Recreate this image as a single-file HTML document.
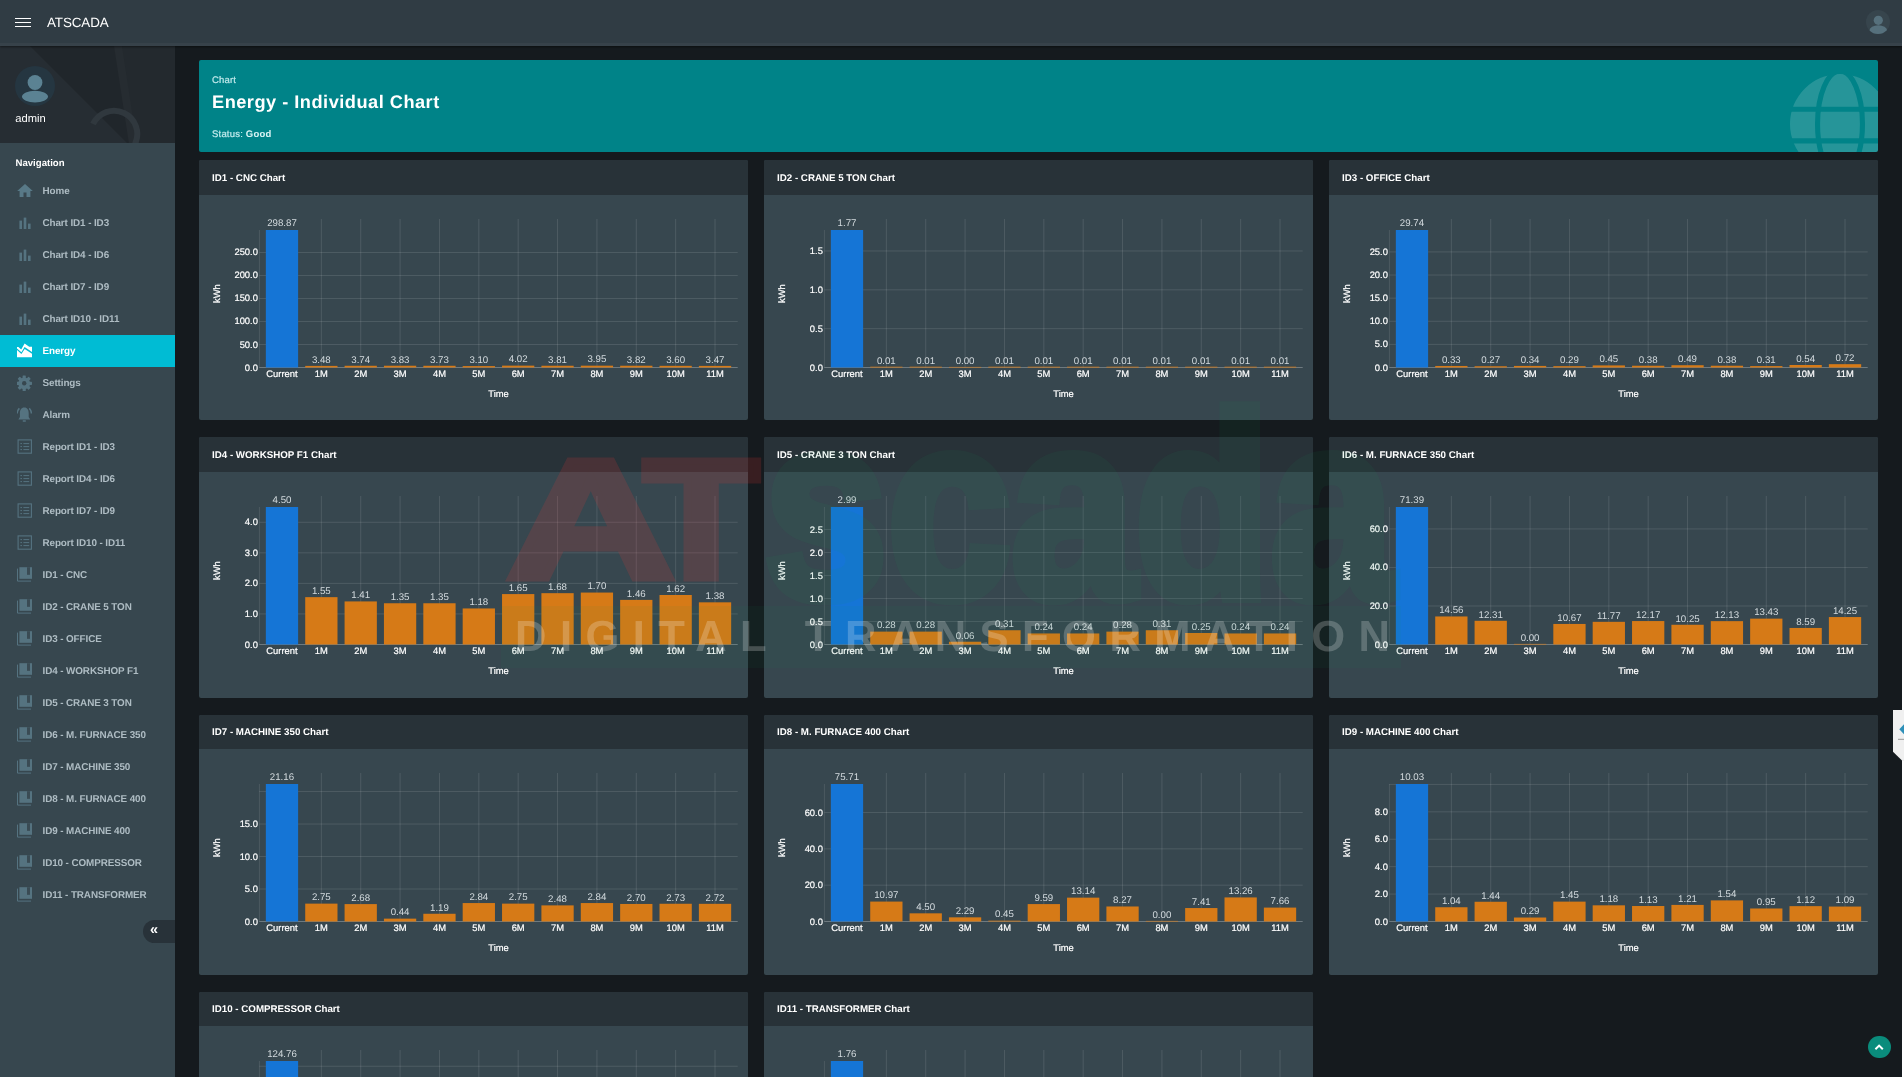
<!DOCTYPE html>
<html lang="en"><head><meta charset="utf-8"><title>ATSCADA - Energy</title>
<style>
html,body{margin:0;padding:0}
body{width:1904px;height:1077px;overflow:hidden;background:#151a1e;font-family:"Liberation Sans", sans-serif;position:relative;color:#fff;text-rendering:geometricPrecision}
svg text{text-rendering:geometricPrecision}
.edge{position:absolute;left:1902px;top:0;width:2px;height:1077px;background:#fff;z-index:50}
.top{position:absolute;left:0;top:0;width:1902px;height:46px;background:#303c44;box-shadow:0 1px 2px rgba(0,0,0,.45);z-index:20}
.burger{position:absolute;left:15px;top:18px;width:16px;height:9px}
.burger i{position:absolute;left:0;width:16px;height:1.2px;background:#fff}
.brand{position:absolute;left:47px;top:14.9px;font-size:13.4px;line-height:16px;color:#fff;letter-spacing:-0.1px}
.tav{position:absolute;left:1866px;top:10px;width:24px;height:24px;border-radius:50%;background:#37454d;overflow:hidden}
.side{position:absolute;left:0;top:46px;width:175px;height:1031px;background:#37474f;z-index:10}
.user{position:absolute;left:0;top:0;width:175px;height:97px;background:#20262b;overflow:hidden}
.uname{position:absolute;left:15.3px;top:66px;font-size:11.2px;line-height:14px;color:#fff;font-weight:normal}
.av{position:absolute;left:15px;top:19.5px;width:40px;height:40px;border-radius:50%;background:#253641;overflow:hidden}
.navt{position:absolute;left:15.5px;top:112px;font-size:9.6px;line-height:12px;font-weight:bold;color:#fff}
.ni{position:absolute;left:0;width:175px;height:32px;color:#557380}
.ni .ic{position:absolute;left:17px;top:8px;width:16px;height:16px;display:block}
.ni .ic svg{display:block}
.ni .lb{position:absolute;left:42.5px;top:11px;font-size:9.9px;line-height:12px;font-weight:bold;color:#aebcc3;white-space:nowrap;letter-spacing:-0.1px}
.ni.hm{color:#587987}
.ni.act{background:#00bcd4;color:#fff}
.ni.act .lb{color:#fff}
.colbtn{position:absolute;left:143px;top:873.7px;width:32px;height:23.5px;border-radius:12px 0 0 12px;background:#283239;color:#fff;font-size:14.5px;line-height:20px;text-indent:7px;font-weight:bold}
.hero{position:absolute;left:199px;top:60px;width:1679px;height:92px;background:#008388;border-radius:2px;overflow:hidden}
.hero .s1{position:absolute;left:13px;top:15px;font-size:9.5px;line-height:12px;color:#c2eaec;letter-spacing:.15px;-webkit-text-stroke:.2px #c2eaec}
.hero .s2{position:absolute;left:13px;top:31px;font-size:18.2px;line-height:22px;font-weight:bold;color:#fff;letter-spacing:0.5px;white-space:nowrap}
.hero .s3{position:absolute;left:13px;top:68.5px;font-size:9.5px;line-height:12px;color:#c4ecee;letter-spacing:.2px}
.hero .s3 span{-webkit-text-stroke:.2px #c4ecee}
.hero .s3 b{color:#d9f4f5}
.globe{position:absolute;left:1591px;top:13.5px;width:100px;height:100px;opacity:.15}
.card{position:absolute;width:549px;height:260px;background:#37474f;border-radius:2px;overflow:hidden}
.card .hd{height:35px;background:#283238;font-size:9.75px;line-height:37.2px;font-weight:bold;color:#fff;padding-left:13px;box-sizing:border-box;white-space:nowrap}
.card svg.ch{display:block}
.ax{stroke:#fff;stroke-width:.2px}
.wm{position:absolute;left:480px;top:400px;width:960px;height:290px;z-index:30;pointer-events:none}
.rt{position:absolute;left:1893px;top:710px;width:11px;height:51px;z-index:60}
.up{position:absolute;left:1868px;top:1035.5px;width:22.5px;height:22.5px;border-radius:50%;background:#0a8c7c;z-index:40}
.layer{position:absolute;left:0;top:0;width:1904px;height:1077px;will-change:transform}
</style></head><body>
<div class="layer">
<div class="top">
  <div class="burger"><i style="top:0"></i><i style="top:4px"></i><i style="top:8px"></i></div>
  <div class="brand">ATSCADA</div>
  <div style="position:absolute;left:0;top:43px;width:1902px;height:3px;background:rgba(255,255,255,.035)"></div>
  <div class="tav"><svg viewBox="0 0 24 24" width="24" height="24"><circle cx="12.3" cy="10.3" r="4.6" fill="#56707c"/><ellipse cx="12.3" cy="20.4" rx="8.8" ry="5.2" fill="#56707c"/></svg></div>
</div>
<div class="side">
  <div class="user">
    <svg width="175" height="98" viewBox="0 0 175 98" style="position:absolute;left:0;top:0"><path d="M0 0 L30 0 L128 98 L0 98 Z" fill="#262d33"/><path d="M118 0 L133 98 L175 98 L175 0 Z" fill="#23292e"/><path d="M114 0 L122 0 L137 98 L129 98 Z" fill="#262c31"/><path d="M93 78 A22 22 0 1 1 135 98" fill="none" stroke="#30383e" stroke-width="6"/></svg>
    <div class="av"><svg viewBox="0 0 40 40" width="40" height="40"><circle cx="20" cy="16.5" r="7.4" fill="#5b8293"/><ellipse cx="20" cy="30.6" rx="13" ry="5.9" fill="#5b8293"/></svg></div>
    <div class="uname">admin</div>
  </div>
  <div class="navt">Navigation</div>
  <div style="position:absolute;left:0;top:-46px">
  <div class="ni hm" style="top:175px"><span class="ic"><svg viewBox="0 0 16 16" width="16" height="16"><path d="M8 1 L0.2 8 H2.6 V14 H6.5 V9.6 H9.5 V14 H13.4 V8 H15.8 Z" fill="currentColor"/></svg></span><span class="lb">Home</span></div><div class="ni" style="top:207px"><span class="ic"><svg viewBox="0 0 16 16" width="16" height="16"><rect x="2.4" y="5.6" width="2.6" height="8.4" fill="currentColor"/><rect x="6.7" y="2.6" width="2.6" height="11.4" fill="currentColor"/><rect x="11" y="8.6" width="2.6" height="5.4" fill="currentColor"/></svg></span><span class="lb">Chart ID1 - ID3</span></div><div class="ni" style="top:239px"><span class="ic"><svg viewBox="0 0 16 16" width="16" height="16"><rect x="2.4" y="5.6" width="2.6" height="8.4" fill="currentColor"/><rect x="6.7" y="2.6" width="2.6" height="11.4" fill="currentColor"/><rect x="11" y="8.6" width="2.6" height="5.4" fill="currentColor"/></svg></span><span class="lb">Chart ID4 - ID6</span></div><div class="ni" style="top:271px"><span class="ic"><svg viewBox="0 0 16 16" width="16" height="16"><rect x="2.4" y="5.6" width="2.6" height="8.4" fill="currentColor"/><rect x="6.7" y="2.6" width="2.6" height="11.4" fill="currentColor"/><rect x="11" y="8.6" width="2.6" height="5.4" fill="currentColor"/></svg></span><span class="lb">Chart ID7 - ID9</span></div><div class="ni" style="top:303px"><span class="ic"><svg viewBox="0 0 16 16" width="16" height="16"><rect x="2.4" y="5.6" width="2.6" height="8.4" fill="currentColor"/><rect x="6.7" y="2.6" width="2.6" height="11.4" fill="currentColor"/><rect x="11" y="8.6" width="2.6" height="5.4" fill="currentColor"/></svg></span><span class="lb">Chart ID10 - ID11</span></div><div class="ni act" style="top:335px"><span class="ic"><svg viewBox="0 0 16 16" width="16" height="16"><path d="M-0.2 4.1 H1.4 L4.2 6.5 L7.6 0.5 L12.2 3.7 H15 V8.9 L7.6 4.1 L4.4 9.3 L-0.2 5.3 Z M-0.2 6.9 L4.4 11.1 L7.7 5.9 L15 10.7 V14.2 H-0.2 Z" fill="currentColor"/></svg></span><span class="lb">Energy</span></div><div class="ni" style="top:367px"><span class="ic"><svg viewBox="0 0 16 16" width="16" height="16"><g fill="currentColor"><circle cx="7.2" cy="8.3" r="5.9"/><rect x="5.6" y="0.5" width="3.2" height="15.6" rx="0.6"/><rect x="5.6" y="0.5" width="3.2" height="15.6" rx="0.6" transform="rotate(45 7.2 8.3)"/><rect x="5.6" y="0.5" width="3.2" height="15.6" rx="0.6" transform="rotate(90 7.2 8.3)"/><rect x="5.6" y="0.5" width="3.2" height="15.6" rx="0.6" transform="rotate(135 7.2 8.3)"/></g><circle cx="7.2" cy="8.3" r="2.2" fill="#37474f"/></svg></span><span class="lb">Settings</span></div><div class="ni" style="top:399px"><span class="ic"><svg viewBox="0 0 16 16" width="16" height="16"><g fill="currentColor"><path d="M7.3 0.6 C4.2 0.6 2.9 3.2 2.9 6.2 V10 L1.4 12.4 H13.2 L11.7 10 V6.2 C11.7 3.2 10.4 0.6 7.3 0.6 Z"/><rect x="5.6" y="13.2" width="3.4" height="1.5" rx="0.7"/><path d="M1.9 0.8 C0.4 2.3 -0.5 4.2 -0.5 6.4 H1 C1 4.6 1.7 3.1 2.9 1.9 Z"/><path d="M12.7 0.8 C14.2 2.3 15.1 4.2 15.1 6.4 H13.6 C13.6 4.6 12.9 3.1 11.7 1.9 Z"/></g></svg></span><span class="lb">Alarm</span></div><div class="ni" style="top:431px"><span class="ic"><svg viewBox="0 0 16 16" width="16" height="16"><g fill="none" stroke="currentColor" stroke-width="1.1"><rect x="1.1" y="0.9" width="13.3" height="13.3"/><path d="M3.4 4.6 H5 M6.4 4.6 H12.2 M3.4 7.6 H5 M6.4 7.6 H12.2 M3.4 10.6 H5 M6.4 10.6 H12.2" stroke-width="1"/></g></svg></span><span class="lb">Report ID1 - ID3</span></div><div class="ni" style="top:463px"><span class="ic"><svg viewBox="0 0 16 16" width="16" height="16"><g fill="none" stroke="currentColor" stroke-width="1.1"><rect x="1.1" y="0.9" width="13.3" height="13.3"/><path d="M3.4 4.6 H5 M6.4 4.6 H12.2 M3.4 7.6 H5 M6.4 7.6 H12.2 M3.4 10.6 H5 M6.4 10.6 H12.2" stroke-width="1"/></g></svg></span><span class="lb">Report ID4 - ID6</span></div><div class="ni" style="top:495px"><span class="ic"><svg viewBox="0 0 16 16" width="16" height="16"><g fill="none" stroke="currentColor" stroke-width="1.1"><rect x="1.1" y="0.9" width="13.3" height="13.3"/><path d="M3.4 4.6 H5 M6.4 4.6 H12.2 M3.4 7.6 H5 M6.4 7.6 H12.2 M3.4 10.6 H5 M6.4 10.6 H12.2" stroke-width="1"/></g></svg></span><span class="lb">Report ID7 - ID9</span></div><div class="ni" style="top:527px"><span class="ic"><svg viewBox="0 0 16 16" width="16" height="16"><g fill="none" stroke="currentColor" stroke-width="1.1"><rect x="1.1" y="0.9" width="13.3" height="13.3"/><path d="M3.4 4.6 H5 M6.4 4.6 H12.2 M3.4 7.6 H5 M6.4 7.6 H12.2 M3.4 10.6 H5 M6.4 10.6 H12.2" stroke-width="1"/></g></svg></span><span class="lb">Report ID10 - ID11</span></div><div class="ni" style="top:559px"><span class="ic"><svg viewBox="0 0 16 16" width="16" height="16"><path d="M2.4 0.2 H15 V11.8 H2.4 Z" fill="currentColor"/><rect x="10" y="0.2" width="3" height="7.6" fill="#3a4b54"/><path d="M0.5 1.6 V14.1 H14" fill="none" stroke="currentColor" stroke-width="1"/></svg></span><span class="lb">ID1 - CNC</span></div><div class="ni" style="top:591px"><span class="ic"><svg viewBox="0 0 16 16" width="16" height="16"><path d="M2.4 0.2 H15 V11.8 H2.4 Z" fill="currentColor"/><rect x="10" y="0.2" width="3" height="7.6" fill="#3a4b54"/><path d="M0.5 1.6 V14.1 H14" fill="none" stroke="currentColor" stroke-width="1"/></svg></span><span class="lb">ID2 - CRANE 5 TON</span></div><div class="ni" style="top:623px"><span class="ic"><svg viewBox="0 0 16 16" width="16" height="16"><path d="M2.4 0.2 H15 V11.8 H2.4 Z" fill="currentColor"/><rect x="10" y="0.2" width="3" height="7.6" fill="#3a4b54"/><path d="M0.5 1.6 V14.1 H14" fill="none" stroke="currentColor" stroke-width="1"/></svg></span><span class="lb">ID3 - OFFICE</span></div><div class="ni" style="top:655px"><span class="ic"><svg viewBox="0 0 16 16" width="16" height="16"><path d="M2.4 0.2 H15 V11.8 H2.4 Z" fill="currentColor"/><rect x="10" y="0.2" width="3" height="7.6" fill="#3a4b54"/><path d="M0.5 1.6 V14.1 H14" fill="none" stroke="currentColor" stroke-width="1"/></svg></span><span class="lb">ID4 - WORKSHOP F1</span></div><div class="ni" style="top:687px"><span class="ic"><svg viewBox="0 0 16 16" width="16" height="16"><path d="M2.4 0.2 H15 V11.8 H2.4 Z" fill="currentColor"/><rect x="10" y="0.2" width="3" height="7.6" fill="#3a4b54"/><path d="M0.5 1.6 V14.1 H14" fill="none" stroke="currentColor" stroke-width="1"/></svg></span><span class="lb">ID5 - CRANE 3 TON</span></div><div class="ni" style="top:719px"><span class="ic"><svg viewBox="0 0 16 16" width="16" height="16"><path d="M2.4 0.2 H15 V11.8 H2.4 Z" fill="currentColor"/><rect x="10" y="0.2" width="3" height="7.6" fill="#3a4b54"/><path d="M0.5 1.6 V14.1 H14" fill="none" stroke="currentColor" stroke-width="1"/></svg></span><span class="lb">ID6 - M. FURNACE 350</span></div><div class="ni" style="top:751px"><span class="ic"><svg viewBox="0 0 16 16" width="16" height="16"><path d="M2.4 0.2 H15 V11.8 H2.4 Z" fill="currentColor"/><rect x="10" y="0.2" width="3" height="7.6" fill="#3a4b54"/><path d="M0.5 1.6 V14.1 H14" fill="none" stroke="currentColor" stroke-width="1"/></svg></span><span class="lb">ID7 - MACHINE 350</span></div><div class="ni" style="top:783px"><span class="ic"><svg viewBox="0 0 16 16" width="16" height="16"><path d="M2.4 0.2 H15 V11.8 H2.4 Z" fill="currentColor"/><rect x="10" y="0.2" width="3" height="7.6" fill="#3a4b54"/><path d="M0.5 1.6 V14.1 H14" fill="none" stroke="currentColor" stroke-width="1"/></svg></span><span class="lb">ID8 - M. FURNACE 400</span></div><div class="ni" style="top:815px"><span class="ic"><svg viewBox="0 0 16 16" width="16" height="16"><path d="M2.4 0.2 H15 V11.8 H2.4 Z" fill="currentColor"/><rect x="10" y="0.2" width="3" height="7.6" fill="#3a4b54"/><path d="M0.5 1.6 V14.1 H14" fill="none" stroke="currentColor" stroke-width="1"/></svg></span><span class="lb">ID9 - MACHINE 400</span></div><div class="ni" style="top:847px"><span class="ic"><svg viewBox="0 0 16 16" width="16" height="16"><path d="M2.4 0.2 H15 V11.8 H2.4 Z" fill="currentColor"/><rect x="10" y="0.2" width="3" height="7.6" fill="#3a4b54"/><path d="M0.5 1.6 V14.1 H14" fill="none" stroke="currentColor" stroke-width="1"/></svg></span><span class="lb">ID10 - COMPRESSOR</span></div><div class="ni" style="top:879px"><span class="ic"><svg viewBox="0 0 16 16" width="16" height="16"><path d="M2.4 0.2 H15 V11.8 H2.4 Z" fill="currentColor"/><rect x="10" y="0.2" width="3" height="7.6" fill="#3a4b54"/><path d="M0.5 1.6 V14.1 H14" fill="none" stroke="currentColor" stroke-width="1"/></svg></span><span class="lb">ID11 - TRANSFORMER</span></div>
  </div>
  <div class="colbtn">«</div>
</div>
<div class="hero">
  <div class="s1">Chart</div>
  <div class="s2">Energy - Individual Chart</div>
  <div class="s3"><span>Status:</span> <b>Good</b></div>
  <svg class="globe" viewBox="0 0 98 98"><defs><mask id="gm"><rect width="98" height="98" fill="#000"/><circle cx="49" cy="49" r="49" fill="#fff"/><g fill="none" stroke="#000" stroke-width="5"><ellipse cx="49" cy="49" rx="22" ry="52"/><path d="M0 34.5 H98 M0 65.5 H98"/></g></mask></defs><rect width="98" height="98" fill="#fff" mask="url(#gm)"/></svg>
</div>
<div class="card" style="left:199px;top:160px;height:260px"><div class="hd" style="height:35px;line-height:37.2px">ID1 - CNC Chart</div><svg class="ch" width="549" height="225" viewBox="0 35 549 225" font-family='"Liberation Sans", sans-serif' font-size="9.4">
<rect x="121.85" y="59.0" width="1" height="148.5" fill="rgba(255,255,255,0.115)"/>
<rect x="161.22" y="59.0" width="1" height="148.5" fill="rgba(255,255,255,0.115)"/>
<rect x="200.58" y="59.0" width="1" height="148.5" fill="rgba(255,255,255,0.115)"/>
<rect x="239.95" y="59.0" width="1" height="148.5" fill="rgba(255,255,255,0.115)"/>
<rect x="279.32" y="59.0" width="1" height="148.5" fill="rgba(255,255,255,0.115)"/>
<rect x="318.68" y="59.0" width="1" height="148.5" fill="rgba(255,255,255,0.115)"/>
<rect x="358.05" y="59.0" width="1" height="148.5" fill="rgba(255,255,255,0.115)"/>
<rect x="397.42" y="59.0" width="1" height="148.5" fill="rgba(255,255,255,0.115)"/>
<rect x="436.78" y="59.0" width="1" height="148.5" fill="rgba(255,255,255,0.115)"/>
<rect x="476.15" y="59.0" width="1" height="148.5" fill="rgba(255,255,255,0.115)"/>
<rect x="515.52" y="59.0" width="1" height="148.5" fill="rgba(255,255,255,0.115)"/>
<rect x="60.3" y="207.00" width="478.4" height="1" fill="rgba(255,255,255,0.28)"/>
<rect x="60.3" y="184.00" width="478.4" height="1" fill="rgba(255,255,255,0.115)"/>
<rect x="60.3" y="160.99" width="478.4" height="1" fill="rgba(255,255,255,0.115)"/>
<rect x="60.3" y="137.99" width="478.4" height="1" fill="rgba(255,255,255,0.115)"/>
<rect x="60.3" y="114.99" width="478.4" height="1" fill="rgba(255,255,255,0.115)"/>
<rect x="60.3" y="91.98" width="478.4" height="1" fill="rgba(255,255,255,0.115)"/>
<rect x="59.9" y="70.0" width="1" height="137.5" fill="rgba(255,255,255,0.10)"/>
<rect x="66.84" y="70.00" width="32.28" height="137.50" fill="#1575d6"/>
<rect x="106.21" y="205.90" width="32.28" height="1.60" fill="#d67a17"/>
<rect x="145.58" y="205.78" width="32.28" height="1.72" fill="#d67a17"/>
<rect x="184.94" y="205.74" width="32.28" height="1.76" fill="#d67a17"/>
<rect x="224.31" y="205.78" width="32.28" height="1.72" fill="#d67a17"/>
<rect x="263.68" y="206.07" width="32.28" height="1.43" fill="#d67a17"/>
<rect x="303.04" y="205.65" width="32.28" height="1.85" fill="#d67a17"/>
<rect x="342.41" y="205.75" width="32.28" height="1.75" fill="#d67a17"/>
<rect x="381.78" y="205.68" width="32.28" height="1.82" fill="#d67a17"/>
<rect x="421.14" y="205.74" width="32.28" height="1.76" fill="#d67a17"/>
<rect x="460.51" y="205.84" width="32.28" height="1.66" fill="#d67a17"/>
<rect x="499.88" y="205.90" width="32.28" height="1.60" fill="#d67a17"/>
<text x="82.98" y="65.80" text-anchor="middle" fill="#d3dade" font-size="9.7">298.87</text>
<text x="122.35" y="202.70" text-anchor="middle" fill="#d3dade" font-size="9.7">3.48</text>
<text x="161.72" y="202.58" text-anchor="middle" fill="#d3dade" font-size="9.7">3.74</text>
<text x="201.08" y="202.54" text-anchor="middle" fill="#d3dade" font-size="9.7">3.83</text>
<text x="240.45" y="202.58" text-anchor="middle" fill="#d3dade" font-size="9.7">3.73</text>
<text x="279.82" y="202.87" text-anchor="middle" fill="#d3dade" font-size="9.7">3.10</text>
<text x="319.18" y="202.45" text-anchor="middle" fill="#d3dade" font-size="9.7">4.02</text>
<text x="358.55" y="202.55" text-anchor="middle" fill="#d3dade" font-size="9.7">3.81</text>
<text x="397.92" y="202.48" text-anchor="middle" fill="#d3dade" font-size="9.7">3.95</text>
<text x="437.28" y="202.54" text-anchor="middle" fill="#d3dade" font-size="9.7">3.82</text>
<text x="476.65" y="202.64" text-anchor="middle" fill="#d3dade" font-size="9.7">3.60</text>
<text x="516.02" y="202.70" text-anchor="middle" fill="#d3dade" font-size="9.7">3.47</text>
<text class="ax" x="82.98" y="216.70" text-anchor="middle" fill="#fff">Current</text>
<text class="ax" x="122.35" y="216.70" text-anchor="middle" fill="#fff">1M</text>
<text class="ax" x="161.72" y="216.70" text-anchor="middle" fill="#fff">2M</text>
<text class="ax" x="201.08" y="216.70" text-anchor="middle" fill="#fff">3M</text>
<text class="ax" x="240.45" y="216.70" text-anchor="middle" fill="#fff">4M</text>
<text class="ax" x="279.82" y="216.70" text-anchor="middle" fill="#fff">5M</text>
<text class="ax" x="319.18" y="216.70" text-anchor="middle" fill="#fff">6M</text>
<text class="ax" x="358.55" y="216.70" text-anchor="middle" fill="#fff">7M</text>
<text class="ax" x="397.92" y="216.70" text-anchor="middle" fill="#fff">8M</text>
<text class="ax" x="437.28" y="216.70" text-anchor="middle" fill="#fff">9M</text>
<text class="ax" x="476.65" y="216.70" text-anchor="middle" fill="#fff">10M</text>
<text class="ax" x="516.02" y="216.70" text-anchor="middle" fill="#fff">11M</text>
<text class="ax" x="58.9" y="210.50" text-anchor="end" fill="#fff">0.0</text>
<text class="ax" x="58.9" y="187.50" text-anchor="end" fill="#fff">50.0</text>
<text class="ax" x="58.9" y="164.49" text-anchor="end" fill="#fff">100.0</text>
<text class="ax" x="58.9" y="141.49" text-anchor="end" fill="#fff">150.0</text>
<text class="ax" x="58.9" y="118.49" text-anchor="end" fill="#fff">200.0</text>
<text class="ax" x="58.9" y="95.48" text-anchor="end" fill="#fff">250.0</text>
<text class="ax" x="299.5" y="237.3" text-anchor="middle" fill="#fff">Time</text>
<text class="ax" transform="translate(21.3,133.6) rotate(-90)" text-anchor="middle" fill="#fff">kWh</text>
</svg></div><div class="card" style="left:764px;top:160px;height:260px"><div class="hd" style="height:35px;line-height:37.2px">ID2 - CRANE 5 TON Chart</div><svg class="ch" width="549" height="225" viewBox="0 35 549 225" font-family='"Liberation Sans", sans-serif' font-size="9.4">
<rect x="121.85" y="59.0" width="1" height="148.5" fill="rgba(255,255,255,0.115)"/>
<rect x="161.22" y="59.0" width="1" height="148.5" fill="rgba(255,255,255,0.115)"/>
<rect x="200.58" y="59.0" width="1" height="148.5" fill="rgba(255,255,255,0.115)"/>
<rect x="239.95" y="59.0" width="1" height="148.5" fill="rgba(255,255,255,0.115)"/>
<rect x="279.32" y="59.0" width="1" height="148.5" fill="rgba(255,255,255,0.115)"/>
<rect x="318.68" y="59.0" width="1" height="148.5" fill="rgba(255,255,255,0.115)"/>
<rect x="358.05" y="59.0" width="1" height="148.5" fill="rgba(255,255,255,0.115)"/>
<rect x="397.42" y="59.0" width="1" height="148.5" fill="rgba(255,255,255,0.115)"/>
<rect x="436.78" y="59.0" width="1" height="148.5" fill="rgba(255,255,255,0.115)"/>
<rect x="476.15" y="59.0" width="1" height="148.5" fill="rgba(255,255,255,0.115)"/>
<rect x="515.52" y="59.0" width="1" height="148.5" fill="rgba(255,255,255,0.115)"/>
<rect x="60.3" y="207.00" width="478.4" height="1" fill="rgba(255,255,255,0.28)"/>
<rect x="60.3" y="168.16" width="478.4" height="1" fill="rgba(255,255,255,0.115)"/>
<rect x="60.3" y="129.32" width="478.4" height="1" fill="rgba(255,255,255,0.115)"/>
<rect x="60.3" y="90.47" width="478.4" height="1" fill="rgba(255,255,255,0.115)"/>
<rect x="59.9" y="70.0" width="1" height="137.5" fill="rgba(255,255,255,0.10)"/>
<rect x="66.84" y="70.00" width="32.28" height="137.50" fill="#1575d6"/>
<rect x="106.21" y="206.72" width="32.28" height="0.78" fill="#d67a17"/>
<rect x="145.58" y="206.72" width="32.28" height="0.78" fill="#d67a17"/>
<rect x="184.94" y="206.90" width="32.28" height="0.60" fill="#d67a17"/>
<rect x="224.31" y="206.72" width="32.28" height="0.78" fill="#d67a17"/>
<rect x="263.68" y="206.72" width="32.28" height="0.78" fill="#d67a17"/>
<rect x="303.04" y="206.72" width="32.28" height="0.78" fill="#d67a17"/>
<rect x="342.41" y="206.72" width="32.28" height="0.78" fill="#d67a17"/>
<rect x="381.78" y="206.72" width="32.28" height="0.78" fill="#d67a17"/>
<rect x="421.14" y="206.72" width="32.28" height="0.78" fill="#d67a17"/>
<rect x="460.51" y="206.72" width="32.28" height="0.78" fill="#d67a17"/>
<rect x="499.88" y="206.72" width="32.28" height="0.78" fill="#d67a17"/>
<text x="82.98" y="65.80" text-anchor="middle" fill="#d3dade" font-size="9.7">1.77</text>
<text x="122.35" y="203.52" text-anchor="middle" fill="#d3dade" font-size="9.7">0.01</text>
<text x="161.72" y="203.52" text-anchor="middle" fill="#d3dade" font-size="9.7">0.01</text>
<text x="201.08" y="204.30" text-anchor="middle" fill="#d3dade" font-size="9.7">0.00</text>
<text x="240.45" y="203.52" text-anchor="middle" fill="#d3dade" font-size="9.7">0.01</text>
<text x="279.82" y="203.52" text-anchor="middle" fill="#d3dade" font-size="9.7">0.01</text>
<text x="319.18" y="203.52" text-anchor="middle" fill="#d3dade" font-size="9.7">0.01</text>
<text x="358.55" y="203.52" text-anchor="middle" fill="#d3dade" font-size="9.7">0.01</text>
<text x="397.92" y="203.52" text-anchor="middle" fill="#d3dade" font-size="9.7">0.01</text>
<text x="437.28" y="203.52" text-anchor="middle" fill="#d3dade" font-size="9.7">0.01</text>
<text x="476.65" y="203.52" text-anchor="middle" fill="#d3dade" font-size="9.7">0.01</text>
<text x="516.02" y="203.52" text-anchor="middle" fill="#d3dade" font-size="9.7">0.01</text>
<text class="ax" x="82.98" y="216.70" text-anchor="middle" fill="#fff">Current</text>
<text class="ax" x="122.35" y="216.70" text-anchor="middle" fill="#fff">1M</text>
<text class="ax" x="161.72" y="216.70" text-anchor="middle" fill="#fff">2M</text>
<text class="ax" x="201.08" y="216.70" text-anchor="middle" fill="#fff">3M</text>
<text class="ax" x="240.45" y="216.70" text-anchor="middle" fill="#fff">4M</text>
<text class="ax" x="279.82" y="216.70" text-anchor="middle" fill="#fff">5M</text>
<text class="ax" x="319.18" y="216.70" text-anchor="middle" fill="#fff">6M</text>
<text class="ax" x="358.55" y="216.70" text-anchor="middle" fill="#fff">7M</text>
<text class="ax" x="397.92" y="216.70" text-anchor="middle" fill="#fff">8M</text>
<text class="ax" x="437.28" y="216.70" text-anchor="middle" fill="#fff">9M</text>
<text class="ax" x="476.65" y="216.70" text-anchor="middle" fill="#fff">10M</text>
<text class="ax" x="516.02" y="216.70" text-anchor="middle" fill="#fff">11M</text>
<text class="ax" x="58.9" y="210.50" text-anchor="end" fill="#fff">0.0</text>
<text class="ax" x="58.9" y="171.66" text-anchor="end" fill="#fff">0.5</text>
<text class="ax" x="58.9" y="132.82" text-anchor="end" fill="#fff">1.0</text>
<text class="ax" x="58.9" y="93.97" text-anchor="end" fill="#fff">1.5</text>
<text class="ax" x="299.5" y="237.3" text-anchor="middle" fill="#fff">Time</text>
<text class="ax" transform="translate(21.3,133.6) rotate(-90)" text-anchor="middle" fill="#fff">kWh</text>
</svg></div><div class="card" style="left:1329px;top:160px;height:260px"><div class="hd" style="height:35px;line-height:37.2px">ID3 - OFFICE Chart</div><svg class="ch" width="549" height="225" viewBox="0 35 549 225" font-family='"Liberation Sans", sans-serif' font-size="9.4">
<rect x="121.85" y="59.0" width="1" height="148.5" fill="rgba(255,255,255,0.115)"/>
<rect x="161.22" y="59.0" width="1" height="148.5" fill="rgba(255,255,255,0.115)"/>
<rect x="200.58" y="59.0" width="1" height="148.5" fill="rgba(255,255,255,0.115)"/>
<rect x="239.95" y="59.0" width="1" height="148.5" fill="rgba(255,255,255,0.115)"/>
<rect x="279.32" y="59.0" width="1" height="148.5" fill="rgba(255,255,255,0.115)"/>
<rect x="318.68" y="59.0" width="1" height="148.5" fill="rgba(255,255,255,0.115)"/>
<rect x="358.05" y="59.0" width="1" height="148.5" fill="rgba(255,255,255,0.115)"/>
<rect x="397.42" y="59.0" width="1" height="148.5" fill="rgba(255,255,255,0.115)"/>
<rect x="436.78" y="59.0" width="1" height="148.5" fill="rgba(255,255,255,0.115)"/>
<rect x="476.15" y="59.0" width="1" height="148.5" fill="rgba(255,255,255,0.115)"/>
<rect x="515.52" y="59.0" width="1" height="148.5" fill="rgba(255,255,255,0.115)"/>
<rect x="60.3" y="207.00" width="478.4" height="1" fill="rgba(255,255,255,0.28)"/>
<rect x="60.3" y="183.88" width="478.4" height="1" fill="rgba(255,255,255,0.115)"/>
<rect x="60.3" y="160.77" width="478.4" height="1" fill="rgba(255,255,255,0.115)"/>
<rect x="60.3" y="137.65" width="478.4" height="1" fill="rgba(255,255,255,0.115)"/>
<rect x="60.3" y="114.53" width="478.4" height="1" fill="rgba(255,255,255,0.115)"/>
<rect x="60.3" y="91.41" width="478.4" height="1" fill="rgba(255,255,255,0.115)"/>
<rect x="59.9" y="70.0" width="1" height="137.5" fill="rgba(255,255,255,0.10)"/>
<rect x="66.84" y="70.00" width="32.28" height="137.50" fill="#1575d6"/>
<rect x="106.21" y="205.97" width="32.28" height="1.53" fill="#d67a17"/>
<rect x="145.58" y="206.25" width="32.28" height="1.25" fill="#d67a17"/>
<rect x="184.94" y="205.93" width="32.28" height="1.57" fill="#d67a17"/>
<rect x="224.31" y="206.16" width="32.28" height="1.34" fill="#d67a17"/>
<rect x="263.68" y="205.42" width="32.28" height="2.08" fill="#d67a17"/>
<rect x="303.04" y="205.74" width="32.28" height="1.76" fill="#d67a17"/>
<rect x="342.41" y="205.23" width="32.28" height="2.27" fill="#d67a17"/>
<rect x="381.78" y="205.74" width="32.28" height="1.76" fill="#d67a17"/>
<rect x="421.14" y="206.07" width="32.28" height="1.43" fill="#d67a17"/>
<rect x="460.51" y="205.00" width="32.28" height="2.50" fill="#d67a17"/>
<rect x="499.88" y="204.17" width="32.28" height="3.33" fill="#d67a17"/>
<text x="82.98" y="65.80" text-anchor="middle" fill="#d3dade" font-size="9.7">29.74</text>
<text x="122.35" y="202.77" text-anchor="middle" fill="#d3dade" font-size="9.7">0.33</text>
<text x="161.72" y="203.05" text-anchor="middle" fill="#d3dade" font-size="9.7">0.27</text>
<text x="201.08" y="202.73" text-anchor="middle" fill="#d3dade" font-size="9.7">0.34</text>
<text x="240.45" y="202.96" text-anchor="middle" fill="#d3dade" font-size="9.7">0.29</text>
<text x="279.82" y="202.22" text-anchor="middle" fill="#d3dade" font-size="9.7">0.45</text>
<text x="319.18" y="202.54" text-anchor="middle" fill="#d3dade" font-size="9.7">0.38</text>
<text x="358.55" y="202.03" text-anchor="middle" fill="#d3dade" font-size="9.7">0.49</text>
<text x="397.92" y="202.54" text-anchor="middle" fill="#d3dade" font-size="9.7">0.38</text>
<text x="437.28" y="202.87" text-anchor="middle" fill="#d3dade" font-size="9.7">0.31</text>
<text x="476.65" y="201.80" text-anchor="middle" fill="#d3dade" font-size="9.7">0.54</text>
<text x="516.02" y="200.97" text-anchor="middle" fill="#d3dade" font-size="9.7">0.72</text>
<text class="ax" x="82.98" y="216.70" text-anchor="middle" fill="#fff">Current</text>
<text class="ax" x="122.35" y="216.70" text-anchor="middle" fill="#fff">1M</text>
<text class="ax" x="161.72" y="216.70" text-anchor="middle" fill="#fff">2M</text>
<text class="ax" x="201.08" y="216.70" text-anchor="middle" fill="#fff">3M</text>
<text class="ax" x="240.45" y="216.70" text-anchor="middle" fill="#fff">4M</text>
<text class="ax" x="279.82" y="216.70" text-anchor="middle" fill="#fff">5M</text>
<text class="ax" x="319.18" y="216.70" text-anchor="middle" fill="#fff">6M</text>
<text class="ax" x="358.55" y="216.70" text-anchor="middle" fill="#fff">7M</text>
<text class="ax" x="397.92" y="216.70" text-anchor="middle" fill="#fff">8M</text>
<text class="ax" x="437.28" y="216.70" text-anchor="middle" fill="#fff">9M</text>
<text class="ax" x="476.65" y="216.70" text-anchor="middle" fill="#fff">10M</text>
<text class="ax" x="516.02" y="216.70" text-anchor="middle" fill="#fff">11M</text>
<text class="ax" x="58.9" y="210.50" text-anchor="end" fill="#fff">0.0</text>
<text class="ax" x="58.9" y="187.38" text-anchor="end" fill="#fff">5.0</text>
<text class="ax" x="58.9" y="164.27" text-anchor="end" fill="#fff">10.0</text>
<text class="ax" x="58.9" y="141.15" text-anchor="end" fill="#fff">15.0</text>
<text class="ax" x="58.9" y="118.03" text-anchor="end" fill="#fff">20.0</text>
<text class="ax" x="58.9" y="94.91" text-anchor="end" fill="#fff">25.0</text>
<text class="ax" x="299.5" y="237.3" text-anchor="middle" fill="#fff">Time</text>
<text class="ax" transform="translate(21.3,133.6) rotate(-90)" text-anchor="middle" fill="#fff">kWh</text>
</svg></div><div class="card" style="left:199px;top:437px;height:261px"><div class="hd" style="height:35px;line-height:37.2px">ID4 - WORKSHOP F1 Chart</div><svg class="ch" width="549" height="225" viewBox="0 35 549 225" font-family='"Liberation Sans", sans-serif' font-size="9.4">
<rect x="121.85" y="59.0" width="1" height="148.5" fill="rgba(255,255,255,0.115)"/>
<rect x="161.22" y="59.0" width="1" height="148.5" fill="rgba(255,255,255,0.115)"/>
<rect x="200.58" y="59.0" width="1" height="148.5" fill="rgba(255,255,255,0.115)"/>
<rect x="239.95" y="59.0" width="1" height="148.5" fill="rgba(255,255,255,0.115)"/>
<rect x="279.32" y="59.0" width="1" height="148.5" fill="rgba(255,255,255,0.115)"/>
<rect x="318.68" y="59.0" width="1" height="148.5" fill="rgba(255,255,255,0.115)"/>
<rect x="358.05" y="59.0" width="1" height="148.5" fill="rgba(255,255,255,0.115)"/>
<rect x="397.42" y="59.0" width="1" height="148.5" fill="rgba(255,255,255,0.115)"/>
<rect x="436.78" y="59.0" width="1" height="148.5" fill="rgba(255,255,255,0.115)"/>
<rect x="476.15" y="59.0" width="1" height="148.5" fill="rgba(255,255,255,0.115)"/>
<rect x="515.52" y="59.0" width="1" height="148.5" fill="rgba(255,255,255,0.115)"/>
<rect x="60.3" y="207.00" width="478.4" height="1" fill="rgba(255,255,255,0.28)"/>
<rect x="60.3" y="176.44" width="478.4" height="1" fill="rgba(255,255,255,0.115)"/>
<rect x="60.3" y="145.89" width="478.4" height="1" fill="rgba(255,255,255,0.115)"/>
<rect x="60.3" y="115.33" width="478.4" height="1" fill="rgba(255,255,255,0.115)"/>
<rect x="60.3" y="84.78" width="478.4" height="1" fill="rgba(255,255,255,0.115)"/>
<rect x="59.9" y="70.0" width="1" height="137.5" fill="rgba(255,255,255,0.10)"/>
<rect x="66.84" y="70.00" width="32.28" height="137.50" fill="#1575d6"/>
<rect x="106.21" y="160.14" width="32.28" height="47.36" fill="#d67a17"/>
<rect x="145.58" y="164.42" width="32.28" height="43.08" fill="#d67a17"/>
<rect x="184.94" y="166.25" width="32.28" height="41.25" fill="#d67a17"/>
<rect x="224.31" y="166.25" width="32.28" height="41.25" fill="#d67a17"/>
<rect x="263.68" y="171.44" width="32.28" height="36.06" fill="#d67a17"/>
<rect x="303.04" y="157.08" width="32.28" height="50.42" fill="#d67a17"/>
<rect x="342.41" y="156.17" width="32.28" height="51.33" fill="#d67a17"/>
<rect x="381.78" y="155.56" width="32.28" height="51.94" fill="#d67a17"/>
<rect x="421.14" y="162.89" width="32.28" height="44.61" fill="#d67a17"/>
<rect x="460.51" y="158.00" width="32.28" height="49.50" fill="#d67a17"/>
<rect x="499.88" y="165.33" width="32.28" height="42.17" fill="#d67a17"/>
<text x="82.98" y="65.80" text-anchor="middle" fill="#d3dade" font-size="9.7">4.50</text>
<text x="122.35" y="156.94" text-anchor="middle" fill="#d3dade" font-size="9.7">1.55</text>
<text x="161.72" y="161.22" text-anchor="middle" fill="#d3dade" font-size="9.7">1.41</text>
<text x="201.08" y="163.05" text-anchor="middle" fill="#d3dade" font-size="9.7">1.35</text>
<text x="240.45" y="163.05" text-anchor="middle" fill="#d3dade" font-size="9.7">1.35</text>
<text x="279.82" y="168.24" text-anchor="middle" fill="#d3dade" font-size="9.7">1.18</text>
<text x="319.18" y="153.88" text-anchor="middle" fill="#d3dade" font-size="9.7">1.65</text>
<text x="358.55" y="152.97" text-anchor="middle" fill="#d3dade" font-size="9.7">1.68</text>
<text x="397.92" y="152.36" text-anchor="middle" fill="#d3dade" font-size="9.7">1.70</text>
<text x="437.28" y="159.69" text-anchor="middle" fill="#d3dade" font-size="9.7">1.46</text>
<text x="476.65" y="154.80" text-anchor="middle" fill="#d3dade" font-size="9.7">1.62</text>
<text x="516.02" y="162.13" text-anchor="middle" fill="#d3dade" font-size="9.7">1.38</text>
<text class="ax" x="82.98" y="216.70" text-anchor="middle" fill="#fff">Current</text>
<text class="ax" x="122.35" y="216.70" text-anchor="middle" fill="#fff">1M</text>
<text class="ax" x="161.72" y="216.70" text-anchor="middle" fill="#fff">2M</text>
<text class="ax" x="201.08" y="216.70" text-anchor="middle" fill="#fff">3M</text>
<text class="ax" x="240.45" y="216.70" text-anchor="middle" fill="#fff">4M</text>
<text class="ax" x="279.82" y="216.70" text-anchor="middle" fill="#fff">5M</text>
<text class="ax" x="319.18" y="216.70" text-anchor="middle" fill="#fff">6M</text>
<text class="ax" x="358.55" y="216.70" text-anchor="middle" fill="#fff">7M</text>
<text class="ax" x="397.92" y="216.70" text-anchor="middle" fill="#fff">8M</text>
<text class="ax" x="437.28" y="216.70" text-anchor="middle" fill="#fff">9M</text>
<text class="ax" x="476.65" y="216.70" text-anchor="middle" fill="#fff">10M</text>
<text class="ax" x="516.02" y="216.70" text-anchor="middle" fill="#fff">11M</text>
<text class="ax" x="58.9" y="210.50" text-anchor="end" fill="#fff">0.0</text>
<text class="ax" x="58.9" y="179.94" text-anchor="end" fill="#fff">1.0</text>
<text class="ax" x="58.9" y="149.39" text-anchor="end" fill="#fff">2.0</text>
<text class="ax" x="58.9" y="118.83" text-anchor="end" fill="#fff">3.0</text>
<text class="ax" x="58.9" y="88.28" text-anchor="end" fill="#fff">4.0</text>
<text class="ax" x="299.5" y="237.3" text-anchor="middle" fill="#fff">Time</text>
<text class="ax" transform="translate(21.3,133.6) rotate(-90)" text-anchor="middle" fill="#fff">kWh</text>
</svg></div><div class="card" style="left:764px;top:437px;height:261px"><div class="hd" style="height:35px;line-height:37.2px">ID5 - CRANE 3 TON Chart</div><svg class="ch" width="549" height="225" viewBox="0 35 549 225" font-family='"Liberation Sans", sans-serif' font-size="9.4">
<rect x="121.85" y="59.0" width="1" height="148.5" fill="rgba(255,255,255,0.115)"/>
<rect x="161.22" y="59.0" width="1" height="148.5" fill="rgba(255,255,255,0.115)"/>
<rect x="200.58" y="59.0" width="1" height="148.5" fill="rgba(255,255,255,0.115)"/>
<rect x="239.95" y="59.0" width="1" height="148.5" fill="rgba(255,255,255,0.115)"/>
<rect x="279.32" y="59.0" width="1" height="148.5" fill="rgba(255,255,255,0.115)"/>
<rect x="318.68" y="59.0" width="1" height="148.5" fill="rgba(255,255,255,0.115)"/>
<rect x="358.05" y="59.0" width="1" height="148.5" fill="rgba(255,255,255,0.115)"/>
<rect x="397.42" y="59.0" width="1" height="148.5" fill="rgba(255,255,255,0.115)"/>
<rect x="436.78" y="59.0" width="1" height="148.5" fill="rgba(255,255,255,0.115)"/>
<rect x="476.15" y="59.0" width="1" height="148.5" fill="rgba(255,255,255,0.115)"/>
<rect x="515.52" y="59.0" width="1" height="148.5" fill="rgba(255,255,255,0.115)"/>
<rect x="60.3" y="207.00" width="478.4" height="1" fill="rgba(255,255,255,0.28)"/>
<rect x="60.3" y="184.01" width="478.4" height="1" fill="rgba(255,255,255,0.115)"/>
<rect x="60.3" y="161.01" width="478.4" height="1" fill="rgba(255,255,255,0.115)"/>
<rect x="60.3" y="138.02" width="478.4" height="1" fill="rgba(255,255,255,0.115)"/>
<rect x="60.3" y="115.03" width="478.4" height="1" fill="rgba(255,255,255,0.115)"/>
<rect x="60.3" y="92.03" width="478.4" height="1" fill="rgba(255,255,255,0.115)"/>
<rect x="59.9" y="70.0" width="1" height="137.5" fill="rgba(255,255,255,0.10)"/>
<rect x="66.84" y="70.00" width="32.28" height="137.50" fill="#1575d6"/>
<rect x="106.21" y="194.62" width="32.28" height="12.88" fill="#d67a17"/>
<rect x="145.58" y="194.62" width="32.28" height="12.88" fill="#d67a17"/>
<rect x="184.94" y="204.74" width="32.28" height="2.76" fill="#d67a17"/>
<rect x="224.31" y="193.24" width="32.28" height="14.26" fill="#d67a17"/>
<rect x="263.68" y="196.46" width="32.28" height="11.04" fill="#d67a17"/>
<rect x="303.04" y="196.46" width="32.28" height="11.04" fill="#d67a17"/>
<rect x="342.41" y="194.62" width="32.28" height="12.88" fill="#d67a17"/>
<rect x="381.78" y="193.24" width="32.28" height="14.26" fill="#d67a17"/>
<rect x="421.14" y="196.00" width="32.28" height="11.50" fill="#d67a17"/>
<rect x="460.51" y="196.46" width="32.28" height="11.04" fill="#d67a17"/>
<rect x="499.88" y="196.46" width="32.28" height="11.04" fill="#d67a17"/>
<text x="82.98" y="65.80" text-anchor="middle" fill="#d3dade" font-size="9.7">2.99</text>
<text x="122.35" y="191.42" text-anchor="middle" fill="#d3dade" font-size="9.7">0.28</text>
<text x="161.72" y="191.42" text-anchor="middle" fill="#d3dade" font-size="9.7">0.28</text>
<text x="201.08" y="201.54" text-anchor="middle" fill="#d3dade" font-size="9.7">0.06</text>
<text x="240.45" y="190.04" text-anchor="middle" fill="#d3dade" font-size="9.7">0.31</text>
<text x="279.82" y="193.26" text-anchor="middle" fill="#d3dade" font-size="9.7">0.24</text>
<text x="319.18" y="193.26" text-anchor="middle" fill="#d3dade" font-size="9.7">0.24</text>
<text x="358.55" y="191.42" text-anchor="middle" fill="#d3dade" font-size="9.7">0.28</text>
<text x="397.92" y="190.04" text-anchor="middle" fill="#d3dade" font-size="9.7">0.31</text>
<text x="437.28" y="192.80" text-anchor="middle" fill="#d3dade" font-size="9.7">0.25</text>
<text x="476.65" y="193.26" text-anchor="middle" fill="#d3dade" font-size="9.7">0.24</text>
<text x="516.02" y="193.26" text-anchor="middle" fill="#d3dade" font-size="9.7">0.24</text>
<text class="ax" x="82.98" y="216.70" text-anchor="middle" fill="#fff">Current</text>
<text class="ax" x="122.35" y="216.70" text-anchor="middle" fill="#fff">1M</text>
<text class="ax" x="161.72" y="216.70" text-anchor="middle" fill="#fff">2M</text>
<text class="ax" x="201.08" y="216.70" text-anchor="middle" fill="#fff">3M</text>
<text class="ax" x="240.45" y="216.70" text-anchor="middle" fill="#fff">4M</text>
<text class="ax" x="279.82" y="216.70" text-anchor="middle" fill="#fff">5M</text>
<text class="ax" x="319.18" y="216.70" text-anchor="middle" fill="#fff">6M</text>
<text class="ax" x="358.55" y="216.70" text-anchor="middle" fill="#fff">7M</text>
<text class="ax" x="397.92" y="216.70" text-anchor="middle" fill="#fff">8M</text>
<text class="ax" x="437.28" y="216.70" text-anchor="middle" fill="#fff">9M</text>
<text class="ax" x="476.65" y="216.70" text-anchor="middle" fill="#fff">10M</text>
<text class="ax" x="516.02" y="216.70" text-anchor="middle" fill="#fff">11M</text>
<text class="ax" x="58.9" y="210.50" text-anchor="end" fill="#fff">0.0</text>
<text class="ax" x="58.9" y="187.51" text-anchor="end" fill="#fff">0.5</text>
<text class="ax" x="58.9" y="164.51" text-anchor="end" fill="#fff">1.0</text>
<text class="ax" x="58.9" y="141.52" text-anchor="end" fill="#fff">1.5</text>
<text class="ax" x="58.9" y="118.53" text-anchor="end" fill="#fff">2.0</text>
<text class="ax" x="58.9" y="95.53" text-anchor="end" fill="#fff">2.5</text>
<text class="ax" x="299.5" y="237.3" text-anchor="middle" fill="#fff">Time</text>
<text class="ax" transform="translate(21.3,133.6) rotate(-90)" text-anchor="middle" fill="#fff">kWh</text>
</svg></div><div class="card" style="left:1329px;top:437px;height:261px"><div class="hd" style="height:35px;line-height:37.2px">ID6 - M. FURNACE 350 Chart</div><svg class="ch" width="549" height="225" viewBox="0 35 549 225" font-family='"Liberation Sans", sans-serif' font-size="9.4">
<rect x="121.85" y="59.0" width="1" height="148.5" fill="rgba(255,255,255,0.115)"/>
<rect x="161.22" y="59.0" width="1" height="148.5" fill="rgba(255,255,255,0.115)"/>
<rect x="200.58" y="59.0" width="1" height="148.5" fill="rgba(255,255,255,0.115)"/>
<rect x="239.95" y="59.0" width="1" height="148.5" fill="rgba(255,255,255,0.115)"/>
<rect x="279.32" y="59.0" width="1" height="148.5" fill="rgba(255,255,255,0.115)"/>
<rect x="318.68" y="59.0" width="1" height="148.5" fill="rgba(255,255,255,0.115)"/>
<rect x="358.05" y="59.0" width="1" height="148.5" fill="rgba(255,255,255,0.115)"/>
<rect x="397.42" y="59.0" width="1" height="148.5" fill="rgba(255,255,255,0.115)"/>
<rect x="436.78" y="59.0" width="1" height="148.5" fill="rgba(255,255,255,0.115)"/>
<rect x="476.15" y="59.0" width="1" height="148.5" fill="rgba(255,255,255,0.115)"/>
<rect x="515.52" y="59.0" width="1" height="148.5" fill="rgba(255,255,255,0.115)"/>
<rect x="60.3" y="207.00" width="478.4" height="1" fill="rgba(255,255,255,0.28)"/>
<rect x="60.3" y="168.48" width="478.4" height="1" fill="rgba(255,255,255,0.115)"/>
<rect x="60.3" y="129.96" width="478.4" height="1" fill="rgba(255,255,255,0.115)"/>
<rect x="60.3" y="91.44" width="478.4" height="1" fill="rgba(255,255,255,0.115)"/>
<rect x="59.9" y="70.0" width="1" height="137.5" fill="rgba(255,255,255,0.10)"/>
<rect x="66.84" y="70.00" width="32.28" height="137.50" fill="#1575d6"/>
<rect x="106.21" y="179.46" width="32.28" height="28.04" fill="#d67a17"/>
<rect x="145.58" y="183.79" width="32.28" height="23.71" fill="#d67a17"/>
<rect x="184.94" y="206.90" width="32.28" height="0.60" fill="#d67a17"/>
<rect x="224.31" y="186.95" width="32.28" height="20.55" fill="#d67a17"/>
<rect x="263.68" y="184.83" width="32.28" height="22.67" fill="#d67a17"/>
<rect x="303.04" y="184.06" width="32.28" height="23.44" fill="#d67a17"/>
<rect x="342.41" y="187.76" width="32.28" height="19.74" fill="#d67a17"/>
<rect x="381.78" y="184.14" width="32.28" height="23.36" fill="#d67a17"/>
<rect x="421.14" y="181.63" width="32.28" height="25.87" fill="#d67a17"/>
<rect x="460.51" y="190.96" width="32.28" height="16.54" fill="#d67a17"/>
<rect x="499.88" y="180.05" width="32.28" height="27.45" fill="#d67a17"/>
<text x="82.98" y="65.80" text-anchor="middle" fill="#d3dade" font-size="9.7">71.39</text>
<text x="122.35" y="176.26" text-anchor="middle" fill="#d3dade" font-size="9.7">14.56</text>
<text x="161.72" y="180.59" text-anchor="middle" fill="#d3dade" font-size="9.7">12.31</text>
<text x="201.08" y="204.30" text-anchor="middle" fill="#d3dade" font-size="9.7">0.00</text>
<text x="240.45" y="183.75" text-anchor="middle" fill="#d3dade" font-size="9.7">10.67</text>
<text x="279.82" y="181.63" text-anchor="middle" fill="#d3dade" font-size="9.7">11.77</text>
<text x="319.18" y="180.86" text-anchor="middle" fill="#d3dade" font-size="9.7">12.17</text>
<text x="358.55" y="184.56" text-anchor="middle" fill="#d3dade" font-size="9.7">10.25</text>
<text x="397.92" y="180.94" text-anchor="middle" fill="#d3dade" font-size="9.7">12.13</text>
<text x="437.28" y="178.43" text-anchor="middle" fill="#d3dade" font-size="9.7">13.43</text>
<text x="476.65" y="187.76" text-anchor="middle" fill="#d3dade" font-size="9.7">8.59</text>
<text x="516.02" y="176.85" text-anchor="middle" fill="#d3dade" font-size="9.7">14.25</text>
<text class="ax" x="82.98" y="216.70" text-anchor="middle" fill="#fff">Current</text>
<text class="ax" x="122.35" y="216.70" text-anchor="middle" fill="#fff">1M</text>
<text class="ax" x="161.72" y="216.70" text-anchor="middle" fill="#fff">2M</text>
<text class="ax" x="201.08" y="216.70" text-anchor="middle" fill="#fff">3M</text>
<text class="ax" x="240.45" y="216.70" text-anchor="middle" fill="#fff">4M</text>
<text class="ax" x="279.82" y="216.70" text-anchor="middle" fill="#fff">5M</text>
<text class="ax" x="319.18" y="216.70" text-anchor="middle" fill="#fff">6M</text>
<text class="ax" x="358.55" y="216.70" text-anchor="middle" fill="#fff">7M</text>
<text class="ax" x="397.92" y="216.70" text-anchor="middle" fill="#fff">8M</text>
<text class="ax" x="437.28" y="216.70" text-anchor="middle" fill="#fff">9M</text>
<text class="ax" x="476.65" y="216.70" text-anchor="middle" fill="#fff">10M</text>
<text class="ax" x="516.02" y="216.70" text-anchor="middle" fill="#fff">11M</text>
<text class="ax" x="58.9" y="210.50" text-anchor="end" fill="#fff">0.0</text>
<text class="ax" x="58.9" y="171.98" text-anchor="end" fill="#fff">20.0</text>
<text class="ax" x="58.9" y="133.46" text-anchor="end" fill="#fff">40.0</text>
<text class="ax" x="58.9" y="94.94" text-anchor="end" fill="#fff">60.0</text>
<text class="ax" x="299.5" y="237.3" text-anchor="middle" fill="#fff">Time</text>
<text class="ax" transform="translate(21.3,133.6) rotate(-90)" text-anchor="middle" fill="#fff">kWh</text>
</svg></div><div class="card" style="left:199px;top:715px;height:259.5px"><div class="hd" style="height:34px;line-height:36.2px">ID7 - MACHINE 350 Chart</div><svg class="ch" width="549" height="225" viewBox="0 35 549 225" font-family='"Liberation Sans", sans-serif' font-size="9.4">
<rect x="121.85" y="59.0" width="1" height="148.5" fill="rgba(255,255,255,0.115)"/>
<rect x="161.22" y="59.0" width="1" height="148.5" fill="rgba(255,255,255,0.115)"/>
<rect x="200.58" y="59.0" width="1" height="148.5" fill="rgba(255,255,255,0.115)"/>
<rect x="239.95" y="59.0" width="1" height="148.5" fill="rgba(255,255,255,0.115)"/>
<rect x="279.32" y="59.0" width="1" height="148.5" fill="rgba(255,255,255,0.115)"/>
<rect x="318.68" y="59.0" width="1" height="148.5" fill="rgba(255,255,255,0.115)"/>
<rect x="358.05" y="59.0" width="1" height="148.5" fill="rgba(255,255,255,0.115)"/>
<rect x="397.42" y="59.0" width="1" height="148.5" fill="rgba(255,255,255,0.115)"/>
<rect x="436.78" y="59.0" width="1" height="148.5" fill="rgba(255,255,255,0.115)"/>
<rect x="476.15" y="59.0" width="1" height="148.5" fill="rgba(255,255,255,0.115)"/>
<rect x="515.52" y="59.0" width="1" height="148.5" fill="rgba(255,255,255,0.115)"/>
<rect x="60.3" y="207.00" width="478.4" height="1" fill="rgba(255,255,255,0.28)"/>
<rect x="60.3" y="174.51" width="478.4" height="1" fill="rgba(255,255,255,0.115)"/>
<rect x="60.3" y="142.02" width="478.4" height="1" fill="rgba(255,255,255,0.115)"/>
<rect x="60.3" y="109.53" width="478.4" height="1" fill="rgba(255,255,255,0.115)"/>
<rect x="60.3" y="77.04" width="478.4" height="1" fill="rgba(255,255,255,0.115)"/>
<rect x="59.9" y="70.0" width="1" height="137.5" fill="rgba(255,255,255,0.10)"/>
<rect x="66.84" y="70.00" width="32.28" height="137.50" fill="#1575d6"/>
<rect x="106.21" y="189.63" width="32.28" height="17.87" fill="#d67a17"/>
<rect x="145.58" y="190.09" width="32.28" height="17.41" fill="#d67a17"/>
<rect x="184.94" y="204.64" width="32.28" height="2.86" fill="#d67a17"/>
<rect x="224.31" y="199.77" width="32.28" height="7.73" fill="#d67a17"/>
<rect x="263.68" y="189.05" width="32.28" height="18.45" fill="#d67a17"/>
<rect x="303.04" y="189.63" width="32.28" height="17.87" fill="#d67a17"/>
<rect x="342.41" y="191.38" width="32.28" height="16.12" fill="#d67a17"/>
<rect x="381.78" y="189.05" width="32.28" height="18.45" fill="#d67a17"/>
<rect x="421.14" y="189.96" width="32.28" height="17.54" fill="#d67a17"/>
<rect x="460.51" y="189.76" width="32.28" height="17.74" fill="#d67a17"/>
<rect x="499.88" y="189.83" width="32.28" height="17.67" fill="#d67a17"/>
<text x="82.98" y="65.80" text-anchor="middle" fill="#d3dade" font-size="9.7">21.16</text>
<text x="122.35" y="186.43" text-anchor="middle" fill="#d3dade" font-size="9.7">2.75</text>
<text x="161.72" y="186.89" text-anchor="middle" fill="#d3dade" font-size="9.7">2.68</text>
<text x="201.08" y="201.44" text-anchor="middle" fill="#d3dade" font-size="9.7">0.44</text>
<text x="240.45" y="196.57" text-anchor="middle" fill="#d3dade" font-size="9.7">1.19</text>
<text x="279.82" y="185.85" text-anchor="middle" fill="#d3dade" font-size="9.7">2.84</text>
<text x="319.18" y="186.43" text-anchor="middle" fill="#d3dade" font-size="9.7">2.75</text>
<text x="358.55" y="188.18" text-anchor="middle" fill="#d3dade" font-size="9.7">2.48</text>
<text x="397.92" y="185.85" text-anchor="middle" fill="#d3dade" font-size="9.7">2.84</text>
<text x="437.28" y="186.76" text-anchor="middle" fill="#d3dade" font-size="9.7">2.70</text>
<text x="476.65" y="186.56" text-anchor="middle" fill="#d3dade" font-size="9.7">2.73</text>
<text x="516.02" y="186.63" text-anchor="middle" fill="#d3dade" font-size="9.7">2.72</text>
<text class="ax" x="82.98" y="216.70" text-anchor="middle" fill="#fff">Current</text>
<text class="ax" x="122.35" y="216.70" text-anchor="middle" fill="#fff">1M</text>
<text class="ax" x="161.72" y="216.70" text-anchor="middle" fill="#fff">2M</text>
<text class="ax" x="201.08" y="216.70" text-anchor="middle" fill="#fff">3M</text>
<text class="ax" x="240.45" y="216.70" text-anchor="middle" fill="#fff">4M</text>
<text class="ax" x="279.82" y="216.70" text-anchor="middle" fill="#fff">5M</text>
<text class="ax" x="319.18" y="216.70" text-anchor="middle" fill="#fff">6M</text>
<text class="ax" x="358.55" y="216.70" text-anchor="middle" fill="#fff">7M</text>
<text class="ax" x="397.92" y="216.70" text-anchor="middle" fill="#fff">8M</text>
<text class="ax" x="437.28" y="216.70" text-anchor="middle" fill="#fff">9M</text>
<text class="ax" x="476.65" y="216.70" text-anchor="middle" fill="#fff">10M</text>
<text class="ax" x="516.02" y="216.70" text-anchor="middle" fill="#fff">11M</text>
<text class="ax" x="58.9" y="210.50" text-anchor="end" fill="#fff">0.0</text>
<text class="ax" x="58.9" y="178.01" text-anchor="end" fill="#fff">5.0</text>
<text class="ax" x="58.9" y="145.52" text-anchor="end" fill="#fff">10.0</text>
<text class="ax" x="58.9" y="113.03" text-anchor="end" fill="#fff">15.0</text>
<text class="ax" x="299.5" y="237.3" text-anchor="middle" fill="#fff">Time</text>
<text class="ax" transform="translate(21.3,133.6) rotate(-90)" text-anchor="middle" fill="#fff">kWh</text>
</svg></div><div class="card" style="left:764px;top:715px;height:259.5px"><div class="hd" style="height:34px;line-height:36.2px">ID8 - M. FURNACE 400 Chart</div><svg class="ch" width="549" height="225" viewBox="0 35 549 225" font-family='"Liberation Sans", sans-serif' font-size="9.4">
<rect x="121.85" y="59.0" width="1" height="148.5" fill="rgba(255,255,255,0.115)"/>
<rect x="161.22" y="59.0" width="1" height="148.5" fill="rgba(255,255,255,0.115)"/>
<rect x="200.58" y="59.0" width="1" height="148.5" fill="rgba(255,255,255,0.115)"/>
<rect x="239.95" y="59.0" width="1" height="148.5" fill="rgba(255,255,255,0.115)"/>
<rect x="279.32" y="59.0" width="1" height="148.5" fill="rgba(255,255,255,0.115)"/>
<rect x="318.68" y="59.0" width="1" height="148.5" fill="rgba(255,255,255,0.115)"/>
<rect x="358.05" y="59.0" width="1" height="148.5" fill="rgba(255,255,255,0.115)"/>
<rect x="397.42" y="59.0" width="1" height="148.5" fill="rgba(255,255,255,0.115)"/>
<rect x="436.78" y="59.0" width="1" height="148.5" fill="rgba(255,255,255,0.115)"/>
<rect x="476.15" y="59.0" width="1" height="148.5" fill="rgba(255,255,255,0.115)"/>
<rect x="515.52" y="59.0" width="1" height="148.5" fill="rgba(255,255,255,0.115)"/>
<rect x="60.3" y="207.00" width="478.4" height="1" fill="rgba(255,255,255,0.28)"/>
<rect x="60.3" y="170.68" width="478.4" height="1" fill="rgba(255,255,255,0.115)"/>
<rect x="60.3" y="134.35" width="478.4" height="1" fill="rgba(255,255,255,0.115)"/>
<rect x="60.3" y="98.03" width="478.4" height="1" fill="rgba(255,255,255,0.115)"/>
<rect x="59.9" y="70.0" width="1" height="137.5" fill="rgba(255,255,255,0.10)"/>
<rect x="66.84" y="70.00" width="32.28" height="137.50" fill="#1575d6"/>
<rect x="106.21" y="187.58" width="32.28" height="19.92" fill="#d67a17"/>
<rect x="145.58" y="199.33" width="32.28" height="8.17" fill="#d67a17"/>
<rect x="184.94" y="203.34" width="32.28" height="4.16" fill="#d67a17"/>
<rect x="224.31" y="206.68" width="32.28" height="0.82" fill="#d67a17"/>
<rect x="263.68" y="190.08" width="32.28" height="17.42" fill="#d67a17"/>
<rect x="303.04" y="183.64" width="32.28" height="23.86" fill="#d67a17"/>
<rect x="342.41" y="192.48" width="32.28" height="15.02" fill="#d67a17"/>
<rect x="381.78" y="206.90" width="32.28" height="0.60" fill="#d67a17"/>
<rect x="421.14" y="194.04" width="32.28" height="13.46" fill="#d67a17"/>
<rect x="460.51" y="183.42" width="32.28" height="24.08" fill="#d67a17"/>
<rect x="499.88" y="193.59" width="32.28" height="13.91" fill="#d67a17"/>
<text x="82.98" y="65.80" text-anchor="middle" fill="#d3dade" font-size="9.7">75.71</text>
<text x="122.35" y="184.38" text-anchor="middle" fill="#d3dade" font-size="9.7">10.97</text>
<text x="161.72" y="196.13" text-anchor="middle" fill="#d3dade" font-size="9.7">4.50</text>
<text x="201.08" y="200.14" text-anchor="middle" fill="#d3dade" font-size="9.7">2.29</text>
<text x="240.45" y="203.48" text-anchor="middle" fill="#d3dade" font-size="9.7">0.45</text>
<text x="279.82" y="186.88" text-anchor="middle" fill="#d3dade" font-size="9.7">9.59</text>
<text x="319.18" y="180.44" text-anchor="middle" fill="#d3dade" font-size="9.7">13.14</text>
<text x="358.55" y="189.28" text-anchor="middle" fill="#d3dade" font-size="9.7">8.27</text>
<text x="397.92" y="204.30" text-anchor="middle" fill="#d3dade" font-size="9.7">0.00</text>
<text x="437.28" y="190.84" text-anchor="middle" fill="#d3dade" font-size="9.7">7.41</text>
<text x="476.65" y="180.22" text-anchor="middle" fill="#d3dade" font-size="9.7">13.26</text>
<text x="516.02" y="190.39" text-anchor="middle" fill="#d3dade" font-size="9.7">7.66</text>
<text class="ax" x="82.98" y="216.70" text-anchor="middle" fill="#fff">Current</text>
<text class="ax" x="122.35" y="216.70" text-anchor="middle" fill="#fff">1M</text>
<text class="ax" x="161.72" y="216.70" text-anchor="middle" fill="#fff">2M</text>
<text class="ax" x="201.08" y="216.70" text-anchor="middle" fill="#fff">3M</text>
<text class="ax" x="240.45" y="216.70" text-anchor="middle" fill="#fff">4M</text>
<text class="ax" x="279.82" y="216.70" text-anchor="middle" fill="#fff">5M</text>
<text class="ax" x="319.18" y="216.70" text-anchor="middle" fill="#fff">6M</text>
<text class="ax" x="358.55" y="216.70" text-anchor="middle" fill="#fff">7M</text>
<text class="ax" x="397.92" y="216.70" text-anchor="middle" fill="#fff">8M</text>
<text class="ax" x="437.28" y="216.70" text-anchor="middle" fill="#fff">9M</text>
<text class="ax" x="476.65" y="216.70" text-anchor="middle" fill="#fff">10M</text>
<text class="ax" x="516.02" y="216.70" text-anchor="middle" fill="#fff">11M</text>
<text class="ax" x="58.9" y="210.50" text-anchor="end" fill="#fff">0.0</text>
<text class="ax" x="58.9" y="174.18" text-anchor="end" fill="#fff">20.0</text>
<text class="ax" x="58.9" y="137.85" text-anchor="end" fill="#fff">40.0</text>
<text class="ax" x="58.9" y="101.53" text-anchor="end" fill="#fff">60.0</text>
<text class="ax" x="299.5" y="237.3" text-anchor="middle" fill="#fff">Time</text>
<text class="ax" transform="translate(21.3,133.6) rotate(-90)" text-anchor="middle" fill="#fff">kWh</text>
</svg></div><div class="card" style="left:1329px;top:715px;height:259.5px"><div class="hd" style="height:34px;line-height:36.2px">ID9 - MACHINE 400 Chart</div><svg class="ch" width="549" height="225" viewBox="0 35 549 225" font-family='"Liberation Sans", sans-serif' font-size="9.4">
<rect x="121.85" y="59.0" width="1" height="148.5" fill="rgba(255,255,255,0.115)"/>
<rect x="161.22" y="59.0" width="1" height="148.5" fill="rgba(255,255,255,0.115)"/>
<rect x="200.58" y="59.0" width="1" height="148.5" fill="rgba(255,255,255,0.115)"/>
<rect x="239.95" y="59.0" width="1" height="148.5" fill="rgba(255,255,255,0.115)"/>
<rect x="279.32" y="59.0" width="1" height="148.5" fill="rgba(255,255,255,0.115)"/>
<rect x="318.68" y="59.0" width="1" height="148.5" fill="rgba(255,255,255,0.115)"/>
<rect x="358.05" y="59.0" width="1" height="148.5" fill="rgba(255,255,255,0.115)"/>
<rect x="397.42" y="59.0" width="1" height="148.5" fill="rgba(255,255,255,0.115)"/>
<rect x="436.78" y="59.0" width="1" height="148.5" fill="rgba(255,255,255,0.115)"/>
<rect x="476.15" y="59.0" width="1" height="148.5" fill="rgba(255,255,255,0.115)"/>
<rect x="515.52" y="59.0" width="1" height="148.5" fill="rgba(255,255,255,0.115)"/>
<rect x="60.3" y="207.00" width="478.4" height="1" fill="rgba(255,255,255,0.28)"/>
<rect x="60.3" y="179.58" width="478.4" height="1" fill="rgba(255,255,255,0.115)"/>
<rect x="60.3" y="152.16" width="478.4" height="1" fill="rgba(255,255,255,0.115)"/>
<rect x="60.3" y="124.75" width="478.4" height="1" fill="rgba(255,255,255,0.115)"/>
<rect x="60.3" y="97.33" width="478.4" height="1" fill="rgba(255,255,255,0.115)"/>
<rect x="60.3" y="69.91" width="478.4" height="1" fill="rgba(255,255,255,0.115)"/>
<rect x="59.9" y="70.0" width="1" height="137.5" fill="rgba(255,255,255,0.10)"/>
<rect x="66.84" y="70.00" width="32.28" height="137.50" fill="#1575d6"/>
<rect x="106.21" y="193.24" width="32.28" height="14.26" fill="#d67a17"/>
<rect x="145.58" y="187.76" width="32.28" height="19.74" fill="#d67a17"/>
<rect x="184.94" y="203.52" width="32.28" height="3.98" fill="#d67a17"/>
<rect x="224.31" y="187.62" width="32.28" height="19.88" fill="#d67a17"/>
<rect x="263.68" y="191.32" width="32.28" height="16.18" fill="#d67a17"/>
<rect x="303.04" y="192.01" width="32.28" height="15.49" fill="#d67a17"/>
<rect x="342.41" y="190.91" width="32.28" height="16.59" fill="#d67a17"/>
<rect x="381.78" y="186.39" width="32.28" height="21.11" fill="#d67a17"/>
<rect x="421.14" y="194.48" width="32.28" height="13.02" fill="#d67a17"/>
<rect x="460.51" y="192.15" width="32.28" height="15.35" fill="#d67a17"/>
<rect x="499.88" y="192.56" width="32.28" height="14.94" fill="#d67a17"/>
<text x="82.98" y="65.80" text-anchor="middle" fill="#d3dade" font-size="9.7">10.03</text>
<text x="122.35" y="190.04" text-anchor="middle" fill="#d3dade" font-size="9.7">1.04</text>
<text x="161.72" y="184.56" text-anchor="middle" fill="#d3dade" font-size="9.7">1.44</text>
<text x="201.08" y="200.32" text-anchor="middle" fill="#d3dade" font-size="9.7">0.29</text>
<text x="240.45" y="184.42" text-anchor="middle" fill="#d3dade" font-size="9.7">1.45</text>
<text x="279.82" y="188.12" text-anchor="middle" fill="#d3dade" font-size="9.7">1.18</text>
<text x="319.18" y="188.81" text-anchor="middle" fill="#d3dade" font-size="9.7">1.13</text>
<text x="358.55" y="187.71" text-anchor="middle" fill="#d3dade" font-size="9.7">1.21</text>
<text x="397.92" y="183.19" text-anchor="middle" fill="#d3dade" font-size="9.7">1.54</text>
<text x="437.28" y="191.28" text-anchor="middle" fill="#d3dade" font-size="9.7">0.95</text>
<text x="476.65" y="188.95" text-anchor="middle" fill="#d3dade" font-size="9.7">1.12</text>
<text x="516.02" y="189.36" text-anchor="middle" fill="#d3dade" font-size="9.7">1.09</text>
<text class="ax" x="82.98" y="216.70" text-anchor="middle" fill="#fff">Current</text>
<text class="ax" x="122.35" y="216.70" text-anchor="middle" fill="#fff">1M</text>
<text class="ax" x="161.72" y="216.70" text-anchor="middle" fill="#fff">2M</text>
<text class="ax" x="201.08" y="216.70" text-anchor="middle" fill="#fff">3M</text>
<text class="ax" x="240.45" y="216.70" text-anchor="middle" fill="#fff">4M</text>
<text class="ax" x="279.82" y="216.70" text-anchor="middle" fill="#fff">5M</text>
<text class="ax" x="319.18" y="216.70" text-anchor="middle" fill="#fff">6M</text>
<text class="ax" x="358.55" y="216.70" text-anchor="middle" fill="#fff">7M</text>
<text class="ax" x="397.92" y="216.70" text-anchor="middle" fill="#fff">8M</text>
<text class="ax" x="437.28" y="216.70" text-anchor="middle" fill="#fff">9M</text>
<text class="ax" x="476.65" y="216.70" text-anchor="middle" fill="#fff">10M</text>
<text class="ax" x="516.02" y="216.70" text-anchor="middle" fill="#fff">11M</text>
<text class="ax" x="58.9" y="210.50" text-anchor="end" fill="#fff">0.0</text>
<text class="ax" x="58.9" y="183.08" text-anchor="end" fill="#fff">2.0</text>
<text class="ax" x="58.9" y="155.66" text-anchor="end" fill="#fff">4.0</text>
<text class="ax" x="58.9" y="128.25" text-anchor="end" fill="#fff">6.0</text>
<text class="ax" x="58.9" y="100.83" text-anchor="end" fill="#fff">8.0</text>
<text class="ax" x="299.5" y="237.3" text-anchor="middle" fill="#fff">Time</text>
<text class="ax" transform="translate(21.3,133.6) rotate(-90)" text-anchor="middle" fill="#fff">kWh</text>
</svg></div><div class="card" style="left:199px;top:992px;height:259px"><div class="hd" style="height:34px;line-height:36.2px">ID10 - COMPRESSOR Chart</div><svg class="ch" width="549" height="225" viewBox="0 35 549 225" font-family='"Liberation Sans", sans-serif' font-size="9.4">
<rect x="121.85" y="59.0" width="1" height="148.5" fill="rgba(255,255,255,0.115)"/>
<rect x="161.22" y="59.0" width="1" height="148.5" fill="rgba(255,255,255,0.115)"/>
<rect x="200.58" y="59.0" width="1" height="148.5" fill="rgba(255,255,255,0.115)"/>
<rect x="239.95" y="59.0" width="1" height="148.5" fill="rgba(255,255,255,0.115)"/>
<rect x="279.32" y="59.0" width="1" height="148.5" fill="rgba(255,255,255,0.115)"/>
<rect x="318.68" y="59.0" width="1" height="148.5" fill="rgba(255,255,255,0.115)"/>
<rect x="358.05" y="59.0" width="1" height="148.5" fill="rgba(255,255,255,0.115)"/>
<rect x="397.42" y="59.0" width="1" height="148.5" fill="rgba(255,255,255,0.115)"/>
<rect x="436.78" y="59.0" width="1" height="148.5" fill="rgba(255,255,255,0.115)"/>
<rect x="476.15" y="59.0" width="1" height="148.5" fill="rgba(255,255,255,0.115)"/>
<rect x="515.52" y="59.0" width="1" height="148.5" fill="rgba(255,255,255,0.115)"/>
<rect x="60.3" y="207.00" width="478.4" height="1" fill="rgba(255,255,255,0.28)"/>
<rect x="60.3" y="184.96" width="478.4" height="1" fill="rgba(255,255,255,0.115)"/>
<rect x="60.3" y="162.92" width="478.4" height="1" fill="rgba(255,255,255,0.115)"/>
<rect x="60.3" y="140.87" width="478.4" height="1" fill="rgba(255,255,255,0.115)"/>
<rect x="60.3" y="118.83" width="478.4" height="1" fill="rgba(255,255,255,0.115)"/>
<rect x="60.3" y="96.79" width="478.4" height="1" fill="rgba(255,255,255,0.115)"/>
<rect x="60.3" y="74.75" width="478.4" height="1" fill="rgba(255,255,255,0.115)"/>
<rect x="59.9" y="70.0" width="1" height="137.5" fill="rgba(255,255,255,0.10)"/>
<rect x="66.84" y="70.00" width="32.28" height="137.50" fill="#1575d6"/>
<rect x="106.21" y="201.99" width="32.28" height="5.51" fill="#d67a17"/>
<rect x="145.58" y="201.99" width="32.28" height="5.51" fill="#d67a17"/>
<rect x="184.94" y="201.99" width="32.28" height="5.51" fill="#d67a17"/>
<rect x="224.31" y="201.99" width="32.28" height="5.51" fill="#d67a17"/>
<rect x="263.68" y="201.99" width="32.28" height="5.51" fill="#d67a17"/>
<rect x="303.04" y="201.99" width="32.28" height="5.51" fill="#d67a17"/>
<rect x="342.41" y="201.99" width="32.28" height="5.51" fill="#d67a17"/>
<rect x="381.78" y="201.99" width="32.28" height="5.51" fill="#d67a17"/>
<rect x="421.14" y="201.99" width="32.28" height="5.51" fill="#d67a17"/>
<rect x="460.51" y="201.99" width="32.28" height="5.51" fill="#d67a17"/>
<rect x="499.88" y="201.99" width="32.28" height="5.51" fill="#d67a17"/>
<text x="82.98" y="65.80" text-anchor="middle" fill="#d3dade" font-size="9.7">124.76</text>
<text x="122.35" y="198.79" text-anchor="middle" fill="#d3dade" font-size="9.7">5.00</text>
<text x="161.72" y="198.79" text-anchor="middle" fill="#d3dade" font-size="9.7">5.00</text>
<text x="201.08" y="198.79" text-anchor="middle" fill="#d3dade" font-size="9.7">5.00</text>
<text x="240.45" y="198.79" text-anchor="middle" fill="#d3dade" font-size="9.7">5.00</text>
<text x="279.82" y="198.79" text-anchor="middle" fill="#d3dade" font-size="9.7">5.00</text>
<text x="319.18" y="198.79" text-anchor="middle" fill="#d3dade" font-size="9.7">5.00</text>
<text x="358.55" y="198.79" text-anchor="middle" fill="#d3dade" font-size="9.7">5.00</text>
<text x="397.92" y="198.79" text-anchor="middle" fill="#d3dade" font-size="9.7">5.00</text>
<text x="437.28" y="198.79" text-anchor="middle" fill="#d3dade" font-size="9.7">5.00</text>
<text x="476.65" y="198.79" text-anchor="middle" fill="#d3dade" font-size="9.7">5.00</text>
<text x="516.02" y="198.79" text-anchor="middle" fill="#d3dade" font-size="9.7">5.00</text>
<text class="ax" x="82.98" y="216.70" text-anchor="middle" fill="#fff">Current</text>
<text class="ax" x="122.35" y="216.70" text-anchor="middle" fill="#fff">1M</text>
<text class="ax" x="161.72" y="216.70" text-anchor="middle" fill="#fff">2M</text>
<text class="ax" x="201.08" y="216.70" text-anchor="middle" fill="#fff">3M</text>
<text class="ax" x="240.45" y="216.70" text-anchor="middle" fill="#fff">4M</text>
<text class="ax" x="279.82" y="216.70" text-anchor="middle" fill="#fff">5M</text>
<text class="ax" x="319.18" y="216.70" text-anchor="middle" fill="#fff">6M</text>
<text class="ax" x="358.55" y="216.70" text-anchor="middle" fill="#fff">7M</text>
<text class="ax" x="397.92" y="216.70" text-anchor="middle" fill="#fff">8M</text>
<text class="ax" x="437.28" y="216.70" text-anchor="middle" fill="#fff">9M</text>
<text class="ax" x="476.65" y="216.70" text-anchor="middle" fill="#fff">10M</text>
<text class="ax" x="516.02" y="216.70" text-anchor="middle" fill="#fff">11M</text>
<text class="ax" x="58.9" y="210.50" text-anchor="end" fill="#fff">0.0</text>
<text class="ax" x="58.9" y="188.46" text-anchor="end" fill="#fff">20.0</text>
<text class="ax" x="58.9" y="166.42" text-anchor="end" fill="#fff">40.0</text>
<text class="ax" x="58.9" y="144.37" text-anchor="end" fill="#fff">60.0</text>
<text class="ax" x="58.9" y="122.33" text-anchor="end" fill="#fff">80.0</text>
<text class="ax" x="58.9" y="100.29" text-anchor="end" fill="#fff">100.0</text>
<text class="ax" x="299.5" y="237.3" text-anchor="middle" fill="#fff">Time</text>
<text class="ax" transform="translate(21.3,133.6) rotate(-90)" text-anchor="middle" fill="#fff">kWh</text>
</svg></div><div class="card" style="left:764px;top:992px;height:259px"><div class="hd" style="height:34px;line-height:36.2px">ID11 - TRANSFORMER Chart</div><svg class="ch" width="549" height="225" viewBox="0 35 549 225" font-family='"Liberation Sans", sans-serif' font-size="9.4">
<rect x="121.85" y="59.0" width="1" height="148.5" fill="rgba(255,255,255,0.115)"/>
<rect x="161.22" y="59.0" width="1" height="148.5" fill="rgba(255,255,255,0.115)"/>
<rect x="200.58" y="59.0" width="1" height="148.5" fill="rgba(255,255,255,0.115)"/>
<rect x="239.95" y="59.0" width="1" height="148.5" fill="rgba(255,255,255,0.115)"/>
<rect x="279.32" y="59.0" width="1" height="148.5" fill="rgba(255,255,255,0.115)"/>
<rect x="318.68" y="59.0" width="1" height="148.5" fill="rgba(255,255,255,0.115)"/>
<rect x="358.05" y="59.0" width="1" height="148.5" fill="rgba(255,255,255,0.115)"/>
<rect x="397.42" y="59.0" width="1" height="148.5" fill="rgba(255,255,255,0.115)"/>
<rect x="436.78" y="59.0" width="1" height="148.5" fill="rgba(255,255,255,0.115)"/>
<rect x="476.15" y="59.0" width="1" height="148.5" fill="rgba(255,255,255,0.115)"/>
<rect x="515.52" y="59.0" width="1" height="148.5" fill="rgba(255,255,255,0.115)"/>
<rect x="60.3" y="207.00" width="478.4" height="1" fill="rgba(255,255,255,0.28)"/>
<rect x="60.3" y="167.94" width="478.4" height="1" fill="rgba(255,255,255,0.115)"/>
<rect x="60.3" y="128.88" width="478.4" height="1" fill="rgba(255,255,255,0.115)"/>
<rect x="60.3" y="89.81" width="478.4" height="1" fill="rgba(255,255,255,0.115)"/>
<rect x="59.9" y="70.0" width="1" height="137.5" fill="rgba(255,255,255,0.10)"/>
<rect x="66.84" y="70.00" width="32.28" height="137.50" fill="#1575d6"/>
<rect x="106.21" y="206.72" width="32.28" height="0.78" fill="#d67a17"/>
<rect x="145.58" y="206.72" width="32.28" height="0.78" fill="#d67a17"/>
<rect x="184.94" y="206.72" width="32.28" height="0.78" fill="#d67a17"/>
<rect x="224.31" y="206.72" width="32.28" height="0.78" fill="#d67a17"/>
<rect x="263.68" y="206.72" width="32.28" height="0.78" fill="#d67a17"/>
<rect x="303.04" y="206.72" width="32.28" height="0.78" fill="#d67a17"/>
<rect x="342.41" y="206.72" width="32.28" height="0.78" fill="#d67a17"/>
<rect x="381.78" y="206.72" width="32.28" height="0.78" fill="#d67a17"/>
<rect x="421.14" y="206.72" width="32.28" height="0.78" fill="#d67a17"/>
<rect x="460.51" y="206.72" width="32.28" height="0.78" fill="#d67a17"/>
<rect x="499.88" y="206.72" width="32.28" height="0.78" fill="#d67a17"/>
<text x="82.98" y="65.80" text-anchor="middle" fill="#d3dade" font-size="9.7">1.76</text>
<text x="122.35" y="203.52" text-anchor="middle" fill="#d3dade" font-size="9.7">0.01</text>
<text x="161.72" y="203.52" text-anchor="middle" fill="#d3dade" font-size="9.7">0.01</text>
<text x="201.08" y="203.52" text-anchor="middle" fill="#d3dade" font-size="9.7">0.01</text>
<text x="240.45" y="203.52" text-anchor="middle" fill="#d3dade" font-size="9.7">0.01</text>
<text x="279.82" y="203.52" text-anchor="middle" fill="#d3dade" font-size="9.7">0.01</text>
<text x="319.18" y="203.52" text-anchor="middle" fill="#d3dade" font-size="9.7">0.01</text>
<text x="358.55" y="203.52" text-anchor="middle" fill="#d3dade" font-size="9.7">0.01</text>
<text x="397.92" y="203.52" text-anchor="middle" fill="#d3dade" font-size="9.7">0.01</text>
<text x="437.28" y="203.52" text-anchor="middle" fill="#d3dade" font-size="9.7">0.01</text>
<text x="476.65" y="203.52" text-anchor="middle" fill="#d3dade" font-size="9.7">0.01</text>
<text x="516.02" y="203.52" text-anchor="middle" fill="#d3dade" font-size="9.7">0.01</text>
<text class="ax" x="82.98" y="216.70" text-anchor="middle" fill="#fff">Current</text>
<text class="ax" x="122.35" y="216.70" text-anchor="middle" fill="#fff">1M</text>
<text class="ax" x="161.72" y="216.70" text-anchor="middle" fill="#fff">2M</text>
<text class="ax" x="201.08" y="216.70" text-anchor="middle" fill="#fff">3M</text>
<text class="ax" x="240.45" y="216.70" text-anchor="middle" fill="#fff">4M</text>
<text class="ax" x="279.82" y="216.70" text-anchor="middle" fill="#fff">5M</text>
<text class="ax" x="319.18" y="216.70" text-anchor="middle" fill="#fff">6M</text>
<text class="ax" x="358.55" y="216.70" text-anchor="middle" fill="#fff">7M</text>
<text class="ax" x="397.92" y="216.70" text-anchor="middle" fill="#fff">8M</text>
<text class="ax" x="437.28" y="216.70" text-anchor="middle" fill="#fff">9M</text>
<text class="ax" x="476.65" y="216.70" text-anchor="middle" fill="#fff">10M</text>
<text class="ax" x="516.02" y="216.70" text-anchor="middle" fill="#fff">11M</text>
<text class="ax" x="58.9" y="210.50" text-anchor="end" fill="#fff">0.0</text>
<text class="ax" x="58.9" y="171.44" text-anchor="end" fill="#fff">0.5</text>
<text class="ax" x="58.9" y="132.38" text-anchor="end" fill="#fff">1.0</text>
<text class="ax" x="58.9" y="93.31" text-anchor="end" fill="#fff">1.5</text>
<text class="ax" x="299.5" y="237.3" text-anchor="middle" fill="#fff">Time</text>
<text class="ax" transform="translate(21.3,133.6) rotate(-90)" text-anchor="middle" fill="#fff">kWh</text>
</svg></div>
<svg class="wm" viewBox="480 400 960 290" font-family='"Liberation Sans", sans-serif' font-weight="bold">
  <rect x="501" y="606" width="900" height="62" fill="#12a05a" opacity=".06"/>
  <g opacity=".17" fill="#e53935" stroke="#e53935" stroke-width="7" stroke-linejoin="miter">
  <text x="0" y="0" transform="translate(506,578) scale(1.38,1)" font-size="170">A</text>
  <text x="0" y="0" transform="translate(643,578) scale(1.12,1)" font-size="170">T</text>
  </g>
  <g opacity=".07" fill="#14a05a" stroke="#14a05a" stroke-width="12">
  <text x="764" y="597" font-size="262" textLength="630" lengthAdjust="spacingAndGlyphs">scada</text>
  </g>
  <text x="515" y="651" font-size="43.5" fill="#fff" opacity=".21" textLength="875" lengthAdjust="spacing">DIGITAL TRANSFORMATION</text>
</svg>
<svg class="rt" viewBox="0 0 11 51"><path d="M0 0 H11 V51 L9 50.5 L0 41.7 Z" fill="#f0f0f0"/><path d="M11 14.3 L6.3 19.3 L11 24.3 Z" fill="#2d8fb8"/><rect x="5" y="28.8" width="6" height="1" fill="#9a9a9a"/></svg>
<div class="up"><svg viewBox="0 0 22.5 22.5" width="22.5" height="22.5" style="display:block"><path d="M7.4 13.2 L11.1 9.6 L14.8 13.2" fill="none" stroke="#fff" stroke-width="2"/></svg></div>
<div class="edge"></div>
</div>
</body></html>
